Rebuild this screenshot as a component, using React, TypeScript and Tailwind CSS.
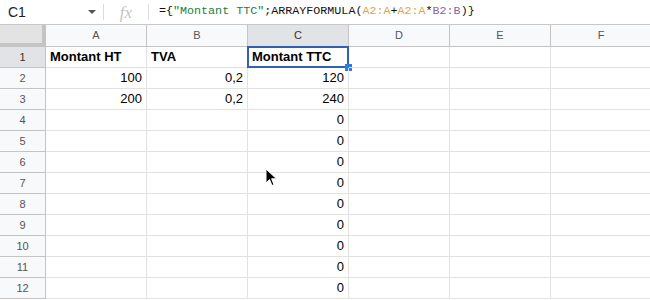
import React from "react";

const cols = ["A", "B", "C", "D", "E", "F"];

type Cell = { t: string; bold?: boolean; right?: boolean };

const data: Record<number, Record<string, Cell>> = {
  1: {
    A: { t: "Montant HT", bold: true },
    B: { t: "TVA", bold: true },
    C: { t: "Montant TTC", bold: true },
  },
  2: { A: { t: "100", right: true }, B: { t: "0,2", right: true }, C: { t: "120", right: true } },
  3: { A: { t: "200", right: true }, B: { t: "0,2", right: true }, C: { t: "240", right: true } },
};

export default function App() {
  const rows = Array.from({ length: 12 }, (_, i) => i + 1);
  return (
    <div
      className="w-[650px] h-[300px] overflow-hidden bg-white relative"
      style={{ fontFamily: '"Liberation Sans", Arial, sans-serif' }}
    >
      {/* formula bar */}
      <div className="h-[25px] flex items-center border-b border-[#c8c8c8] bg-white">
        <div className="w-[103px] flex items-center justify-between pl-[8px] pr-[7px] text-[14px] text-[#222]">
          <span>C1</span>
          <span className="w-0 h-0 border-l-[4px] border-r-[4px] border-t-[4px] border-l-transparent border-r-transparent border-t-[#555]" />
        </div>
        <div className="w-px h-[16px] bg-[#dadce0]" />
        <div className="w-[44px] flex justify-center">
          <span
            className="italic text-[17px] text-[#c4c4c4] leading-none"
            style={{ fontFamily: '"Liberation Serif", serif' }}
          >
            fx
          </span>
        </div>
        <div className="w-px h-[16px] bg-[#dadce0]" />
        <div
          className="pl-[10px] text-[11.7px] text-[#111] whitespace-pre"
          style={{ fontFamily: '"Liberation Mono", monospace' }}
        >
          <span>={"{"}</span>
          <span className="text-[#188038]">"Montant TTC"</span>
          <span>;ARRAYFORMULA(</span>
          <span className="text-[#e8a33a]">A2:A</span>
          <span>+</span>
          <span className="text-[#e8a33a]">A2:A</span>
          <span>*</span>
          <span className="text-[#8a63a8]">B2:B</span>
          <span>)</span>
          <span>{"}"}</span>
        </div>
      </div>

      {/* column headers */}
      <div className="flex h-[22px]">
        <div className="w-[46px] shrink-0 bg-[#e3e3e3] border-r-[4px] border-b-[4px] border-[#c4c4c4]" />
        {cols.map((c) => (
          <div
            key={c}
            className={`w-[101px] shrink-0 flex items-center justify-center text-[11px] border-r border-b border-[#c4c4c4] ${
              c === "C" ? "bg-[#e1e3e6] text-[#333]" : "bg-[#f8f9fa] text-[#555]"
            }`}
          >
            {c}
          </div>
        ))}
      </div>

      {/* rows */}
      {rows.map((r) => (
        <div key={r} className="flex h-[21px]">
          <div
            className={`w-[46px] shrink-0 flex items-center justify-center text-[11px] border-r border-b border-[#c4c4c4] ${
              r === 1 ? "bg-[#e1e3e6] text-[#333]" : "bg-[#f8f9fa] text-[#555]"
            }`}
          >
            {r}
          </div>
          {cols.map((c) => {
            let cell = data[r]?.[c];
            if (!cell && c === "C" && r >= 4) cell = { t: "0", right: true };
            const selected = r === 1 && c === "C";
            return (
              <div
                key={c}
                className={`w-[101px] shrink-0 flex items-center px-[4px] text-[13px] text-black border-r border-b border-[#e2e2e2] relative ${
                  cell?.right ? "justify-end" : "justify-start"
                } ${cell?.bold ? "font-bold" : ""}`}
              >
                {cell?.t}
                {selected && (
                  <>
                    <div className="absolute -left-[1px] -top-[1px] -right-[1px] -bottom-[1px] border-2 border-[#2f63b0]" />
                    <div className="absolute -right-[4px] -bottom-[4px] w-[7px] h-[7px] bg-[#2f7be0]" />
                  </>
                )}
              </div>
            );
          })}
        </div>
      ))}

      {/* mouse cursor */}
      <svg
        className="absolute left-[265px] top-[168px]"
        width="14"
        height="20"
        viewBox="0 0 14 20"
      >
        <path d="M1 1 L1 15 L4.5 11.5 L7 17.5 L9 16.6 L6.6 10.8 L11.5 10.8 Z" fill="#000" stroke="#fff" strokeWidth="1" />
      </svg>
    </div>
  );
}
